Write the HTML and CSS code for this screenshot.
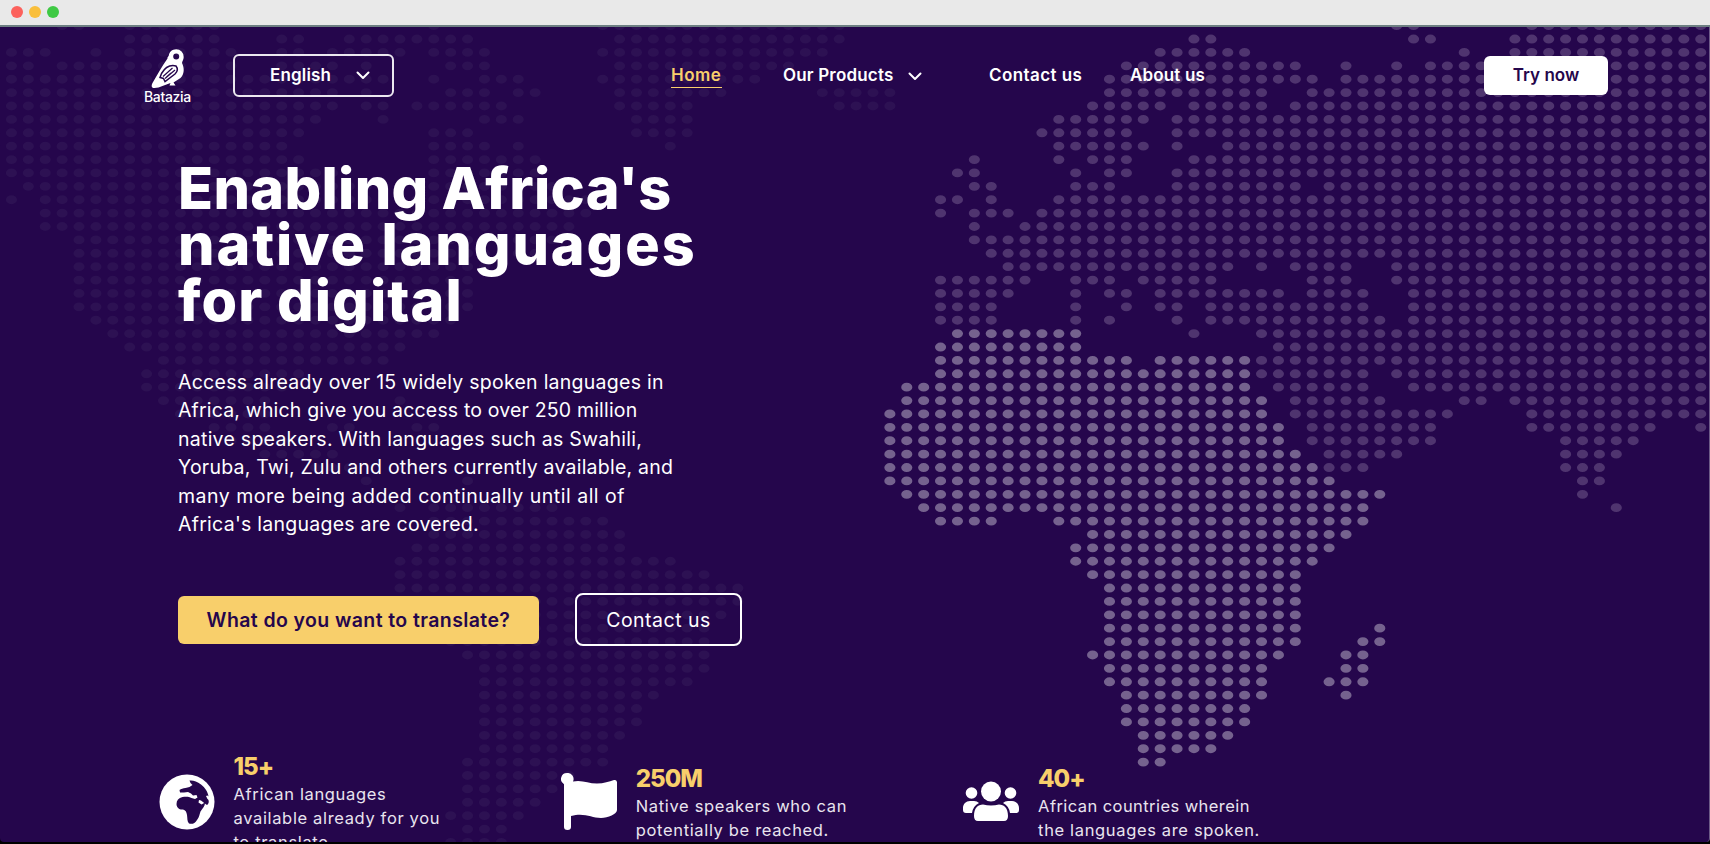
FILE: index.html
```
<!DOCTYPE html>
<html lang="en">
<head>
<meta charset="utf-8">
<title>Batazia</title>
<link rel="stylesheet" href="styles.css">
</head>
<body>
<div class="window">
  <div class="titlebar"><i class="light red"></i><i class="light amber"></i><i class="light green"></i></div>
  <main class="page">
    <!-- Dotted world map: one unit per dot, each run of dots is a dashed round-capped line -->
    <svg class="map" viewBox="0 0 1710 815">
      <g transform="translate(-5.45 -1.35) scale(16.893 13.39)">
        <path class="dots americas" d="M4 0H5.01M8 0H13.01M26 0H26.01M36 0H50.01M8 1H13.01M17 1H18.01M21 1H28.01M37 1H50.01M1 2H3.01M6 2H6.01M8 2H14.01M17 2H18.01M20 2H24.01M26 2H29.01M36 2H49.01M0 3H2.01M4 3H14.01M17 3H20.01M22 3H22.01M27 3H29.01M37 3H47.01M0 4H23.01M26 4H26.01M29 4H31.01M36 4H45.01M0 5H20.01M22 5H22.01M27 5H29.01M31 5H32.01M37 5H43.01M49 5H53.01M0 6H20.01M22 6H23.01M25 6H30.01M37 6H41.01M50 6H53.01M0 7H19.01M23 7H23.01M29 7H31.01M38 7H41.01M0 8H18.01M26 8H28.01M38 8H41.01M0 9H17.01M26 9H29.01M31 9H31.01M40 9H40.01M0 10H18.01M26 10H32.01M1 11H20.01M26 11H32.01M2 12H22.01M25 12H33.01M1 13H1.01M3 13H35.01M3 14H35.01M3 15H34.01M5 16H33.01M5 17H32.01M5 18H30.01M5 19H28.01M5 20H28.01M5 21H28.01M6 22H27.01M7 23H26.01M8 24H24.01M10 25H23.01M9 26H18.01M9 27H17.01M10 28H16.01M24 28H24.01M11 29H16.01M13 30H16.01M20 30H21.01M25 30H26.01M14 31H17.01M16 32H20.01M19 33H21.01M22 34H22.01M28 34H28.01M24 36H24.01M26 36H33.01M26 37H36.01M26 38H37.01M25 39H37.01M24 40H40.01M24 41H42.01M24 42H44.01M24 43H44.01M25 44H43.01M26 45H42.01M27 46H42.01M28 47H42.01M29 48H42.01M29 49H41.01M29 50H39.01M29 51H38.01M29 52H38.01M29 53H37.01M29 54H36.01M28 55H36.01M28 56H34.01M28 57H33.01M28 58H32.01M27 59H31.01M28 60H30.01M27 61H30.01"/>
        <path class="dots eurasia" d="M83 0H84.01M91 0H101.01M71 1H72.01M84 1H85.01M90 1H101.01M69 2H74.01M87 2H87.01M90 2H101.01M67 3H77.01M80 3H80.01M83 3H83.01M85 3H101.01M66 4H78.01M80 4H101.01M66 5H75.01M78 5H101.01M65 6H69.01M71 6H75.01M77 6H101.01M63 7H68.01M70 7H101.01M62 8H67.01M70 8H101.01M63 9H68.01M70 9H70.01M73 9H101.01M58 10H58.01M63 10H63.01M65 10H67.01M71 10H101.01M57 11H58.01M64 11H64.01M66 11H67.01M70 11H101.01M58 12H59.01M64 12H66.01M70 12H77.01M79 12H101.01M56 13H57.01M59 13H59.01M63 13H101.01M56 14H56.01M58 14H60.01M62 14H101.01M58 15H58.01M61 15H101.01M58 16H101.01M59 17H101.01M60 18H73.01M75 18H75.01M77 18H80.01M83 18H101.01M56 19H61.01M64 19H66.01M68 19H72.01M78 19H80.01M83 19H101.01M56 20H60.01M64 20H64.01M66 20H67.01M69 20H76.01M78 20H81.01M84 20H101.01M56 21H59.01M64 21H64.01M67 21H67.01M69 21H70.01M72 21H81.01M84 21H101.01M56 22H59.01M64 22H64.01M66 22H66.01M70 22H70.01M72 22H82.01M84 22H101.01M71 23H71.01M75 23H101.01M76 24H101.01M75 25H101.01M75 26H81.01M83 26H101.01M76 27H81.01M84 27H101.01M77 28H82.01M87 28H88.01M90 28H101.01M77 29H86.01M91 29H101.01M78 30H85.01M91 30H98.01M101 30H101.01M78 31H85.01M93 31H97.01M79 32H83.01M93 32H96.01M79 33H81.01M93 33H95.01M94 34H95.01M94 35H94.01M96 36H96.01"/>
        <path class="dots africa" d="M57 23H64.01M56 24H64.01M56 25H67.01M69 25H74.01M56 26H74.01M54 27H74.01M54 28H75.01M53 29H75.01M53 30H76.01M53 31H76.01M53 32H77.01M53 33H78.01M53 34H79.01M54 35H82.01M55 36H81.01M56 37H59.01M63 37H81.01M65 38H80.01M64 39H79.01M64 40H78.01M65 41H77.01M66 42H77.01M66 43H77.01M66 44H77.01M66 45H77.01M82 45H82.01M66 46H77.01M81 46H82.01M65 47H76.01M80 47H81.01M66 48H75.01M80 48H81.01M66 49H75.01M79 49H81.01M67 50H75.01M80 50H80.01M67 51H74.01M67 52H74.01M68 53H73.01M68 54H72.01M68 55H69.01"/>
      </g>
    </svg>

    <header class="header">
      <a class="logo">
        <svg class="bird" viewBox="0 0 34 40">
          <path fill="#fff" fill-rule="evenodd" d="M16.500 9.500C16 8.500 17.500 7.500 17.800 6.500C18.300 3 21 0.200 25.200 0.200A7.600 7.600 0 0 1 32.700 8C32.700 10.500 31.300 12 31 14C33.500 19 33.500 25 29.500 29L22.500 33.500L24.500 36.500H18.500L19.500 34C14 35.500 9 39 3.500 39C0.500 39 0 37 1.500 34C6 26.500 11 17 16.500 9.500ZM25.200 4.500A3 3 0 1 0 25.200 10.500A3 3 0 1 0 25.200 4.500Z"/>
          <path fill="#fff" stroke="#25064c" stroke-width="1.500" d="M9 28.500L10.500 24.500C14 18.500 19 15.500 25 17C27 19.500 26.500 22.500 24 25L14 32.500L12.500 29.500Z"/>
          <path fill="none" stroke="#25064c" stroke-width="1.200" d="M12 27.500L21.500 19M14 29.500L24 21M15.500 28L20 24"/>
        </svg>
        <span class="brand">Batazia</span>
      </a>
      <div class="select"><span>English</span><svg class="chev" viewBox="0 0 14 9"><path d="M1.500 1.500L7 7L12.500 1.500"/></svg></div>
      <nav class="nav">
        <a class="home">Home</a>
        <a class="products"><span>Our Products</span><svg class="chev" viewBox="0 0 14 9"><path d="M1.500 1.500L7 7L12.500 1.500"/></svg></a>
        <a class="contact">Contact us</a>
        <a class="about">About us</a>
      </nav>
      <a class="try">Try now</a>
    </header>

    <section class="hero">
      <h1><span class="h1a">Enabling Africa's</span><span class="h1b">native languages</span><span class="h1c">for digital</span></h1>
      <p class="lead">Access already over 15 widely spoken languages in<br><span class="tight">Africa, which give you access to over 250 million</span><br>native speakers. With languages such as Swahili,<br><span class="tighter">Yoruba, Twi, Zulu and others currently available, and</span><br><span class="loose">many more being added continually until all of</span><br>Africa's languages are covered.</p>
      <div class="actions">
        <a class="btn primary">What do you want to translate?</a>
        <a class="btn outline">Contact us</a>
      </div>
    </section>

    <section class="stats">
      <div class="stat first">
        <svg class="icon" viewBox="0 0 56 56">
          <circle cx="28" cy="28" r="27.500" fill="#fff"/>
          <path fill="#25064c" d="M30.500 6.500C34 6 38 7.500 42 10.500C46 13.500 49 18 49.500 22.500L48.500 21.500L47 22L48.500 25C50.500 26 50 30 48 31L46.500 30L42 26.500L40 26L39.500 28.500L42.500 30.500L46 28.500C46 32 44 34 41.500 37.500C40.500 40 40.500 43 38 46C36 49.500 33 50.500 30 49.500C28 47.500 28.500 44 28 41C27.500 38 26.500 36 24 35.500C20.500 36 17.500 33.500 17.500 30C17.500 26.500 19.500 24 23.500 23C27 22.500 30 22.500 32.500 24L36 25L38.500 23.500L37.500 21L34 21.500L32 19.500L29 18L25 18.500L21 18.500L20.500 16C22 14.500 24 14.500 26.500 14L30.500 13L33.500 11L31.500 9Z"/>
        </svg>
        <div><b>15+</b><p>African languages<br>available already for you<br>to translate.</p></div>
      </div>
      <div class="stat">
        <svg class="icon" viewBox="0 0 56 57">
          <path fill="#fff" d="M6 0A6 6 0 0 1 12 8.500C21 6.500 27 10.500 36 10.500C43 10.500 48 8.500 53 7C55 6.500 56 8 56 9.500V37C56 41 47 45 40 45C30 45 24 39.500 10 43V54Q10 57 6.500 57Q3 57 3 54V11.200A6 6 0 0 1 6 0Z"/>
        </svg>
        <div><b>250M</b><p>Native speakers who can<br>potentially be reached.</p></div>
      </div>
      <div class="stat">
        <svg class="icon" viewBox="0 0 56 57">
          <g fill="#fff"><circle cx="28" cy="18.500" r="10"/><circle cx="8.500" cy="20" r="5.800"/><circle cx="47.500" cy="20" r="5.800"/>
          <path d="M11 43C11 35 15 31.500 20 31.500Q28 33.500 36 31.500C41 31.500 45 35 45 43Q45 48 41 48H15Q11 48 11 43ZM0 35C0 31 3 28 7 28H11Q14 28 16 30Q10 33 9 40H3Q0 40 0 37ZM56 35C56 31 53 28 49 28H45Q42 28 40 30Q46 33 47 40H53Q56 40 56 37Z"/></g>
        </svg>
        <div><b>40+</b><p><span class="narrow">African countries wherein</span><br>the languages are spoken.</p></div>
      </div>
    </section>
  </main>
</div>
</body>
</html>
```
FILE: styles.css
```
* { box-sizing: border-box; }
body { margin: 0; font-family: Inter, "Open Sans", sans-serif; color: #fff; background: #000; }
.window { width: 1710px; height: 844px; display: flex; flex-direction: column; overflow: hidden; }
.titlebar { height: 27px; flex: none; background: #e9e9e9; border-bottom: 2px solid #6d7f82; display: flex; gap: 6px; padding: 6px 0 0 10.500px; }
.light { width: 12px; height: 12px; border-radius: 50%; }
.red { background: #fc615c; }
.amber { background: #f9bf3c; }
.green { background: #3fc944; }
.page { position: relative; height: 815px; background: #25064c; border-right: 1px solid #6c5a86; overflow: hidden; display: flex; flex-direction: column; border-radius: 0 0 4px 4px; }
.map { position: absolute; left: 0; top: 0; width: 1710px; height: 815px; }
.dots { fill: none; stroke-linecap: round; stroke-width: .66; stroke-dasharray: 0 1; }
.americas { stroke: #2d1153; }
.eurasia { stroke: #4f346f; }
.africa { stroke: #75628e; }
.header, .hero, .stats { position: relative; flex: none; }
.header { display: flex; height: 97px; padding-left: 143px; font-size: 17px; font-weight: 600; line-height: 22px; white-space: nowrap; }
.logo { width: 48px; margin: 21.500px 42px 0 0; display: flex; flex-direction: column; }
.bird { width: 34px; height: 40px; margin-left: 7.500px; }
.brand { font: 500 14px/16px Inter, sans-serif; letter-spacing: -.35px; margin: 0 0 0 1px; }
.select { width: 161px; height: 43px; margin-top: 27px; padding: 0 22px 2px 35px; border: 2px solid #ece8f0; border-radius: 6px; display: flex; align-items: center; justify-content: space-between; letter-spacing: .15px; }
.chev { width: 14px; height: 9px; margin-top: 2px; fill: none; stroke: #fff; stroke-width: 2; stroke-linecap: round; stroke-linejoin: round; }
.nav { display: flex; align-items: flex-start; margin-left: 277px; padding-top: 37px; width: 813px; }
.home { width: 51px; height: 24px; color: #f8cf6b; border-bottom: 1.500px solid #f8cf6b; margin-right: 61px; letter-spacing: .5px; }
.products { width: 138.500px; display: flex; align-items: center; justify-content: space-between; margin-right: 67.500px; letter-spacing: .18px; }
.contact { width: 93px; margin-right: 48px; letter-spacing: .43px; }
.about { letter-spacing: .15px; }
.try { width: 124px; height: 39px; margin-top: 29px; background: #fff; color: #25064c; border-radius: 6px; text-align: center; line-height: 38px; }
.hero { padding: 36px 0 0 178px; }
h1 { margin: 0; display: flex; flex-direction: column; font-size: 57.500px; line-height: 56px; font-weight: 800; white-space: nowrap; }
.h1a { letter-spacing: .330px; }
.h1b { letter-spacing: 1.900px; }
.h1c { letter-spacing: 1.050px; }
.lead { margin: 39.500px 0 0; font-size: 19.500px; line-height: 28.500px; letter-spacing: .26px; white-space: nowrap; }
.tight { letter-spacing: .17px; }
.tighter { letter-spacing: .22px; }
.loose { letter-spacing: .51px; }
.actions { display: flex; align-items: center; gap: 36px; margin-top: 54.500px; }
.btn { display: flex; align-items: center; justify-content: center; font-size: 19.500px; white-space: nowrap; }
.primary { width: 361px; height: 48px; background: #f8cf6b; color: #25064c; border-radius: 6px; font-weight: 600; letter-spacing: .4px; }
.outline { width: 167px; height: 53px; border: 2px solid #fff; border-radius: 8px; letter-spacing: .5px; }
.stats { display: flex; padding-left: 158.700px; margin-top: 104px; white-space: nowrap; }
.stat { width: 402.300px; display: flex; gap: 18.800px; padding-top: 11.500px; }
.stat.first { padding-top: 0; }
.icon { width: 56px; height: 57px; margin-top: 11.500px; }
.first .icon { height: 56px; margin-top: 24px; }
.stat b { display: block; padding-top: 3px; font-size: 24px; line-height: 28px; font-weight: 800; letter-spacing: -1px; color: #f8cf6b; }
.stat p { margin: 1px 0 0; font-size: 16.500px; line-height: 24px; letter-spacing: .65px; color: #e9e4ef; }
.stat .narrow { letter-spacing: .43px; }
```
